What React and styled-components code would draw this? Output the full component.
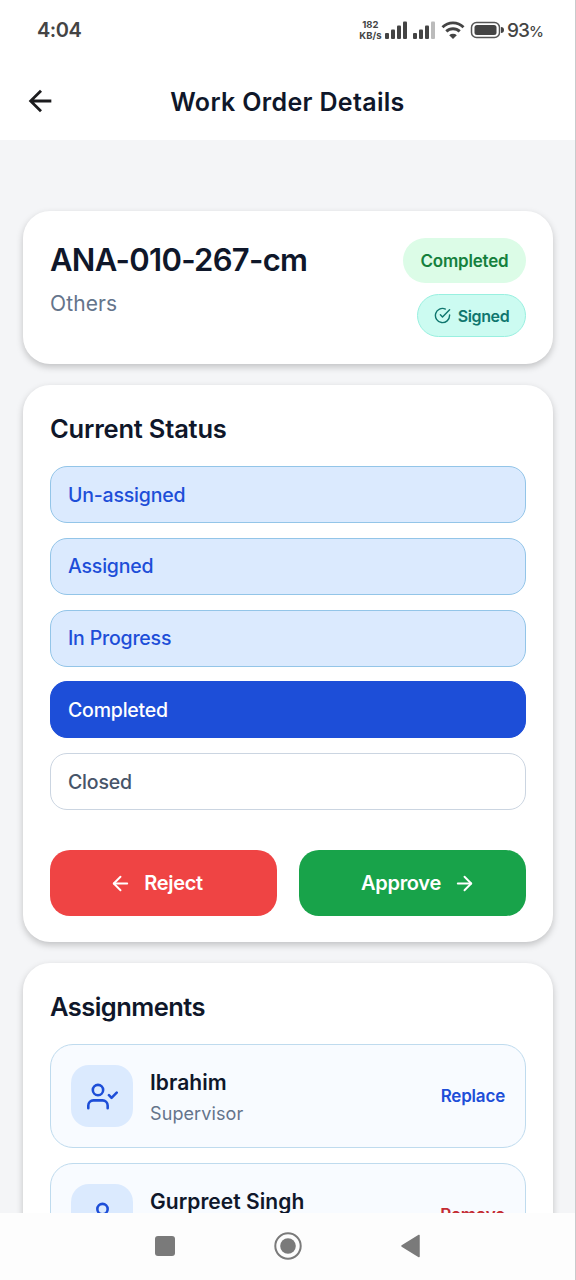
import React from 'react';
import styled, { createGlobalStyle } from 'styled-components';
import { FiArrowLeft, FiArrowRight, FiCheckCircle, FiUser, FiUserCheck } from 'react-icons/fi';
import { MdArrowBack } from 'react-icons/md';

const GlobalStyle = createGlobalStyle`
  * {
    box-sizing: border-box;
  }

  body {
    margin: 0;
    background: #f4f5f7;
    overflow: hidden;
  }

  h1, h2, h3, p {
    margin: 0;
  }

  button {
    font: inherit;
    border: none;
    background: none;
    padding: 0;
    cursor: pointer;
  }
`;

const Screen = styled.div`
  display: flex;
  flex-direction: column;
  width: 576px;
  height: 1280px;
  background: #f4f5f7;
  border-right: 1px solid #c9cacc;
  font-family: Inter, 'Noto Sans', sans-serif;
  color: #0f172a;
  white-space: nowrap;
  overflow: hidden;
`;

const StatusBar = styled.div`
  display: flex;
  align-items: center;
  flex: none;
  height: 60px;
  padding: 0 32px 0 37px;
  background: #fff;
  color: #444;
`;

const Clock = styled.span`
  font-size: 20px;
  font-weight: 600;
  letter-spacing: -0.5px;
  margin-right: auto;
`;

const NetSpeed = styled.div`
  display: flex;
  flex-direction: column;
  align-items: center;
  width: 23px;
  font-size: 9.5px;
  line-height: 11px;
  font-weight: 700;
  margin: -1px 3px 0 0;
`;

const Battery = styled.span`
  font-size: 19px;
  font-weight: 500;
  letter-spacing: -0.9px;

  small {
    font-size: 15px;
  }
`;

const Header = styled.header`
  display: grid;
  grid-template-columns: 34px 1fr 34px;
  align-items: center;
  flex: none;
  height: 80px;
  padding: 3px 23px 0;
  background: #fff;
`;

const BackButton = styled.button`
  display: flex;
  margin-top: -2px;
  color: #1c1c1e;
`;

const Title = styled.h1`
  font-size: 25px;
  font-weight: 600;
  letter-spacing: 0.33px;
  text-align: center;
`;

const Content = styled.main`
  flex: 1;
  min-height: 0;
  display: flex;
  flex-direction: column;
  gap: 21px;
  padding: 71px 22px 0 23px;
  overflow: hidden;
`;

const Card = styled.section`
  flex: none;
  height: ${(p) => p.$height}px;
  padding: 27px;
  background: #fff;
  border-radius: 27px;
  box-shadow: 0 3px 7px rgba(0, 0, 0, 0.21);
`;

const Summary = styled(Card)`
  display: flex;
  justify-content: space-between;
`;

const OrderCode = styled.h2`
  font-size: 31px;
  line-height: 42px;
  font-weight: 600;
  letter-spacing: -0.7px;
  margin-top: 1px;
`;

const Category = styled.p`
  font-size: 21px;
  line-height: 28px;
  margin-top: 9px;
  letter-spacing: 0.1px;
  color: #64748b;
`;

const Badges = styled.div`
  display: flex;
  flex-direction: column;
  align-items: flex-end;
  gap: 11px;
`;

const Badge = styled.span`
  display: flex;
  align-items: center;
  justify-content: center;
  gap: 7px;
  width: ${(p) => (p.$signed ? 109 : 123)}px;
  height: ${(p) => (p.$signed ? 43 : 45)}px;
  border-radius: 23px;
  border: ${(p) => (p.$signed ? '1px solid #99f0e0' : 'none')};
  background: ${(p) => (p.$signed ? '#ccfbf1' : '#dcfce7')};
  color: ${(p) => (p.$signed ? '#0f766e' : '#15803d')};
  font-size: ${(p) => (p.$signed ? 16 : 17)}px;
  font-weight: 600;
  letter-spacing: ${(p) => (p.$signed ? -0.4 : -0.2)}px;
`;

const SectionTitle = styled.h2`
  font-size: 25.5px;
  line-height: 34px;
  font-weight: 600;
  letter-spacing: ${(p) => p.$spacing}px;
`;

const StatusList = styled.div`
  display: grid;
  grid-template-rows: repeat(5, 57px);
  gap: 14.8px;
  margin-top: 20px;
`;

const statusStyles = {
  done: { bg: '#dbeafe', border: '#93c5e8', color: '#1d4ed8' },
  active: { bg: '#1d4ed8', border: '#1d4ed8', color: '#fff' },
  next: { bg: '#fff', border: '#cbd5e1', color: '#475569' },
};

const Status = styled.div`
  display: flex;
  align-items: center;
  padding: 0 17px;
  border-radius: 17px;
  border: 1px solid ${(p) => statusStyles[p.$state].border};
  background: ${(p) => statusStyles[p.$state].bg};
  color: ${(p) => statusStyles[p.$state].color};
  font-size: 19.5px;
  font-weight: 500;
  letter-spacing: -0.2px;
`;

const Actions = styled.div`
  display: grid;
  grid-template-columns: 1fr 1fr;
  gap: 22px;
  margin-top: 40px;
`;

const ActionButton = styled.button`
  display: flex;
  align-items: center;
  justify-content: center;
  gap: 12px;
  height: 66px;
  padding: ${(p) => (p.$back ? '0 15px 0 0' : '0 0 0 12px')};
  border-radius: 20px;
  background: ${(p) => (p.$back ? '#ef4444' : '#18a34a')};
  color: #fff;
  font-size: 20px;
  font-weight: 600;
  letter-spacing: -0.3px;
`;

const Member = styled.div`
  display: flex;
  align-items: center;
  height: 104px;
  margin-top: ${(p) => (p.$first ? 20 : 15)}px;
  padding: 0 20px;
  border: 1px solid #bfdbee;
  border-radius: 23px;
  background: #f8fbff;
`;

const Avatar = styled.div`
  display: flex;
  align-items: center;
  justify-content: center;
  width: 62px;
  height: 62px;
  margin-right: 17px;
  border-radius: 18px;
  background: #dbeafe;
  color: #1d4ed8;
`;

const MemberInfo = styled.div`
  flex: 1;
  padding-top: 4px;
`;

const MemberName = styled.h3`
  font-size: 21px;
  line-height: 30px;
  font-weight: 600;
  letter-spacing: 0.05px;
`;

const MemberRole = styled.p`
  font-size: 18px;
  line-height: 28px;
  margin-top: 2px;
  letter-spacing: 0.1px;
  color: #64748b;
`;

const LinkButton = styled.button`
  color: ${(p) => (p.$danger ? '#c42b32' : '#1d4ed8')};
  font-size: 17px;
  font-weight: 600;
  letter-spacing: -0.2px;
`;

const NavBar = styled.nav`
  display: flex;
  justify-content: center;
  align-items: center;
  gap: 96px;
  flex: none;
  height: 67px;
  padding-bottom: 1px;
  background: #fdfdfd;
`;

const statuses = [
  { label: 'Un-assigned', state: 'done' },
  { label: 'Assigned', state: 'done' },
  { label: 'In Progress', state: 'done' },
  { label: 'Completed', state: 'active' },
  { label: 'Closed', state: 'next' },
];

const members = [
  { name: 'Ibrahim', role: 'Supervisor', action: 'Replace', icon: FiUserCheck },
  { name: 'Gurpreet Singh', action: 'Remove', icon: FiUser, danger: true },
];

const StatusIcons = () => (
  <svg width="122" height="24" viewBox="0 0 122 24" fill="#444">
    {/* sim 1 */}
    <rect x="0" y="15" width="4" height="6" rx="1" />
    <rect x="6" y="11.5" width="4" height="9.5" rx="1" />
    <rect x="12" y="7.5" width="4" height="13.5" rx="1" />
    <rect x="18" y="3.5" width="4" height="17.5" rx="1" />
    {/* sim 2 */}
    <rect x="28" y="15" width="4" height="6" rx="1" />
    <rect x="34" y="11.5" width="4" height="9.5" rx="1" />
    <rect x="40" y="7.5" width="4" height="13.5" rx="1" />
    <rect x="46" y="3.5" width="4" height="17.5" rx="1" fill="#bbb" />
    {/* wifi */}
    <g fill="none" stroke="#444" strokeWidth="2.9">
      <path d="M57.5 9.2a15 15 0 0 1 21 0" />
      <path d="M61.3 13.4a9.6 9.6 0 0 1 13.4 0" />
    </g>
    <path d="M64.2 17.2a5.6 5.6 0 0 1 7.6 0L68 21z" />
    {/* battery */}
    <rect x="86.5" y="4.5" width="28" height="15" rx="5" fill="none" stroke="#555" strokeWidth="1.5" />
    <rect x="89.5" y="7" width="22" height="10" rx="2.5" />
    <path d="M116 9a3 3 0 0 1 0 6z" />
  </svg>
);

const App = () => {
  return (
    <>
      <GlobalStyle />
      <Screen>
        <StatusBar>
          <Clock>4:04</Clock>
          <NetSpeed>
            <span>182</span>
            <span>KB/s</span>
          </NetSpeed>
          <StatusIcons />
          <Battery>
            93<small>%</small>
          </Battery>
        </StatusBar>

        <Header>
          <BackButton aria-label="Back">
            <MdArrowBack size={34} />
          </BackButton>
          <Title>Work Order Details</Title>
        </Header>

        <Content>
          <Summary $height={153}>
            <div>
              <OrderCode>ANA-010-267-cm</OrderCode>
              <Category>Others</Category>
            </div>
            <Badges>
              <Badge>Completed</Badge>
              <Badge $signed>
                <FiCheckCircle size={17} />
                Signed
              </Badge>
            </Badges>
          </Summary>

          <Card $height={557}>
            <SectionTitle $spacing={-0.2}>Current Status</SectionTitle>
            <StatusList>
              {statuses.map((status) => (
                <Status key={status.label} $state={status.state}>
                  {status.label}
                </Status>
              ))}
            </StatusList>
            <Actions>
              <ActionButton $back>
                <FiArrowLeft size={23} />
                Reject
              </ActionButton>
              <ActionButton>
                Approve
                <FiArrowRight size={23} />
              </ActionButton>
            </Actions>
          </Card>

          <Card $height={330}>
            <SectionTitle $spacing={-0.55}>Assignments</SectionTitle>
            {members.map(({ name, role, action, icon: Icon, danger }, index) => (
              <Member key={name} $first={index === 0}>
                <Avatar>
                  <Icon size={31} />
                </Avatar>
                <MemberInfo>
                  <MemberName>{name}</MemberName>
                  <MemberRole>{role || '\u00a0'}</MemberRole>
                </MemberInfo>
                <LinkButton $danger={danger}>{action}</LinkButton>
              </Member>
            ))}
          </Card>
        </Content>

        <NavBar>
          <svg width="24" height="30" viewBox="0 0 24 30">
            <rect x="2" y="5" width="20" height="20" rx="3" fill="#7a7a7a" />
          </svg>
          <svg width="30" height="30" viewBox="0 0 30 30">
            <circle cx="15" cy="15" r="12.7" fill="none" stroke="#7a7a7a" strokeWidth="2" />
            <circle cx="15" cy="15" r="7.8" fill="#7a7a7a" />
          </svg>
          <svg width="24" height="30" viewBox="0 0 24 30">
            <path d="M3 15 20 4.5v21z" fill="#7a7a7a" stroke="#7a7a7a" strokeWidth="1.5" strokeLinejoin="round" />
          </svg>
        </NavBar>
      </Screen>
    </>
  );
};

export default App;
